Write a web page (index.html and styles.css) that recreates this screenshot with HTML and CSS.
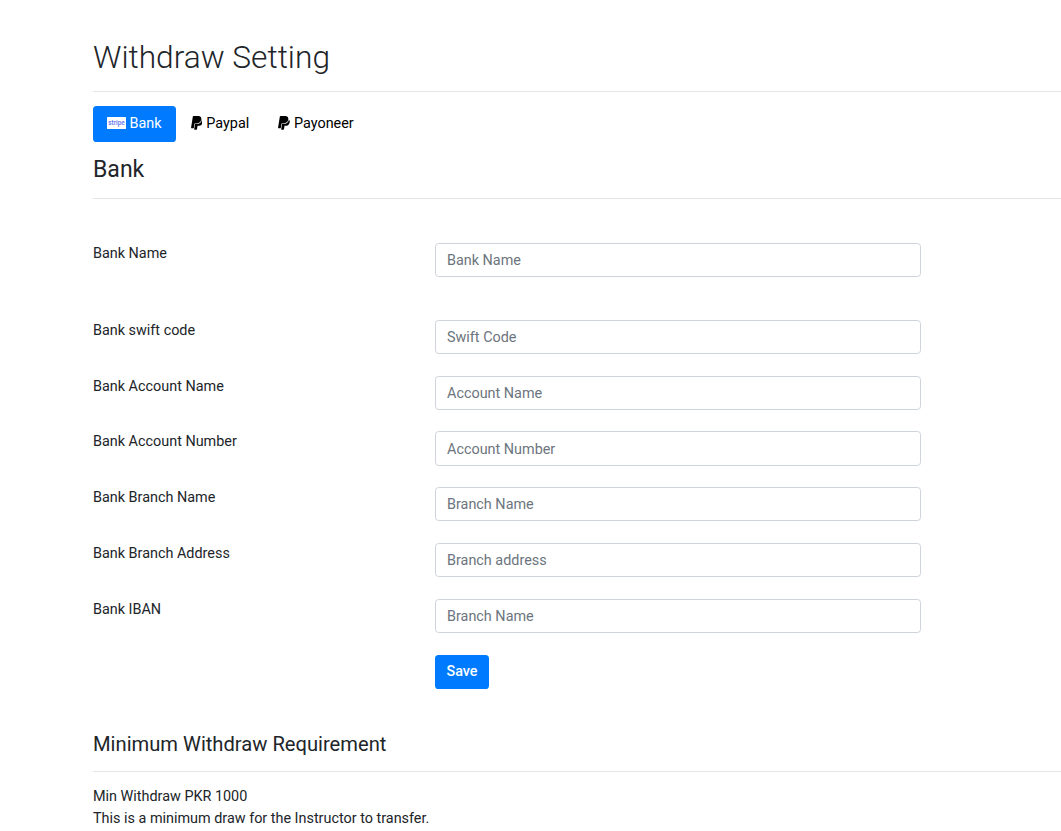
FILE: index.html
```html
<!DOCTYPE html>
<html lang="en">
<head>
<meta charset="utf-8">
<title>Withdraw Setting</title>
<link rel="stylesheet" href="styles.css">
</head>
<body>
<main class="page">
  <h1 class="title">Withdraw Setting</h1>
  <nav class="tabs">
    <a class="tab active"><svg class="stripe" viewBox="0 0 19 12"><rect width="19" height="12" rx=".5" fill="#fff"/><text x="1.3" y="7.8" textLength="16.4" lengthAdjust="spacingAndGlyphs" class="stripe-text">stripe</text></svg>Bank</a>
    <a class="tab"><svg class="paypal" viewBox="0 0 384 512"><path d="M111.4 295.9c-3.5 19.2-17.4 108.7-21.5 134-.3 1.8-1 2.5-3 2.5H12.3c-7.6 0-13.1-6.6-12.1-13.900L58.800 46.600c1.500-9.600 10.100-16.900 20-16.900 152.300 0 165.100-3.700 204 11.400 60.100 23.300 65.600 79.500 44 140.300-21.500 62.600-72.500 89.500-140.100 90.300-43.400.7-69.500-7-75.300 24.200zM357.100 152c-1.800-1.300-2.500-1.800-3 1.300-2 11.400-5.100 22.500-8.800 33.600-39.900 113.800-150.500 103.900-204.500 103.900-6.100 0-10.100 3.300-10.900 9.400-22.600 140.400-27.100 169.700-27.100 169.700-1 7.100 3.500 12.900 10.600 12.900h63.500c8.600 0 15.700-6.300 17.400-14.900.7-5.400-1.100 6.100 14.400-91.300 4.600-22 14.300-19.700 29.300-19.700 71 0 126.400-28.800 142.900-112.300 6.500-34.800 4.600-71.400-23.800-92.600z"/></svg>Paypal</a>
    <a class="tab"><svg class="paypal" viewBox="0 0 384 512"><path d="M111.4 295.9c-3.5 19.2-17.4 108.7-21.5 134-.3 1.8-1 2.5-3 2.5H12.3c-7.6 0-13.1-6.6-12.1-13.900L58.800 46.600c1.500-9.600 10.100-16.900 20-16.900 152.300 0 165.100-3.700 204 11.400 60.100 23.300 65.600 79.500 44 140.300-21.500 62.600-72.500 89.500-140.100 90.300-43.400.7-69.500-7-75.300 24.200zM357.100 152c-1.800-1.300-2.500-1.800-3 1.300-2 11.400-5.100 22.500-8.800 33.600-39.900 113.800-150.500 103.900-204.500 103.900-6.100 0-10.100 3.300-10.900 9.400-22.600 140.400-27.100 169.700-27.100 169.700-1 7.100 3.500 12.900 10.600 12.900h63.500c8.600 0 15.700-6.300 17.400-14.900.7-5.400-1.100 6.100 14.400-91.300 4.600-22 14.300-19.700 29.300-19.700 71 0 126.400-28.800 142.900-112.300 6.500-34.800 4.600-71.400-23.800-92.600z"/></svg>Payoneer</a>
  </nav>
  <h2 class="heading">Bank</h2>
  <form class="form">
    <div class="row first"><label>Bank Name</label><input class="control" placeholder="Bank Name"></div>
    <div class="row"><label>Bank swift code</label><input class="control" placeholder="Swift Code"></div>
    <div class="row"><label>Bank Account Name</label><input class="control" placeholder="Account Name"></div>
    <div class="row"><label>Bank Account Number</label><input class="control" placeholder="Account Number"></div>
    <div class="row"><label>Bank Branch Name</label><input class="control" placeholder="Branch Name"></div>
    <div class="row"><label>Bank Branch Address</label><input class="control" placeholder="Branch address"></div>
    <div class="row"><label>Bank IBAN</label><input class="control" placeholder="Branch Name"></div>
    <div class="row"><span></span><button class="save" type="button">Save</button></div>
  </form>
  <h3 class="requirement">Minimum Withdraw Requirement</h3>
  <p class="note">Min Withdraw PKR 1000<br>This is a minimum draw for the Instructor to transfer.</p>
</main>
</body>
</html>
```
FILE: styles.css
```css
* { box-sizing: border-box; }
html { overflow: hidden; }
body { margin: 0; background: #fff; color: #212529; font: 400 14.4px/21.6px Roboto, sans-serif; }
.page { padding: 37px 0 0 93px; }
h1, h2, h3, p { margin: 0; }
.title { height: 55px; padding-top: 1px; border-bottom: 1px solid #e5e5e5; font-size: 31.68px; line-height: 40px; font-weight: 300; }
.tabs { display: flex; margin-top: 14px; }
.tab { display: flex; align-items: center; height: 36px; padding: 0 14.4px 1px; color: #000; }
.active { background: #007bff; color: #fff; border-radius: 3.6px; }
.stripe { width: 19px; height: 12px; margin: 0 3.5px 1px -.4px; }
.stripe-text { font: 500 7px Roboto, sans-serif; fill: #5a72f0; }
.paypal { width: 11.8px; height: 15.6px; margin: 0 4px 1px .2px; }
.tab:last-child { padding-left: 14.4px; }
.heading { height: 57px; padding-top: 14px; border-bottom: 1px solid #e5e5e5; font-size: 23.04px; line-height: 28px; font-weight: 400; }
.form { display: flex; flex-direction: column; gap: 21.6px; margin-top: 44px; }
.row { display: grid; grid-template-columns: 342px 486px; align-items: start; min-height: 34.2px; }
.first { margin-bottom: 21px; }
.control { width: 100%; height: 34.2px; padding: 6.2px 11px 5px; border: 1px solid #ced4da; border-radius: 3.6px; font: inherit; color: #495057; }
.control::placeholder { color: #6c757d; opacity: 1; }
.save { justify-self: start; width: 54px; height: 34px; margin-top: .6px; padding: 0 0 1px; border: 0; border-radius: 3.6px; background: #007bff; color: #fff; font: inherit; font-weight: 500; }
.requirement { height: 40px; margin-top: 43px; border-bottom: 1px solid #e5e5e5; font-size: 20.16px; line-height: 25px; font-weight: 400; }
.note { margin-top: 13.8px; line-height: 22px; }
```
